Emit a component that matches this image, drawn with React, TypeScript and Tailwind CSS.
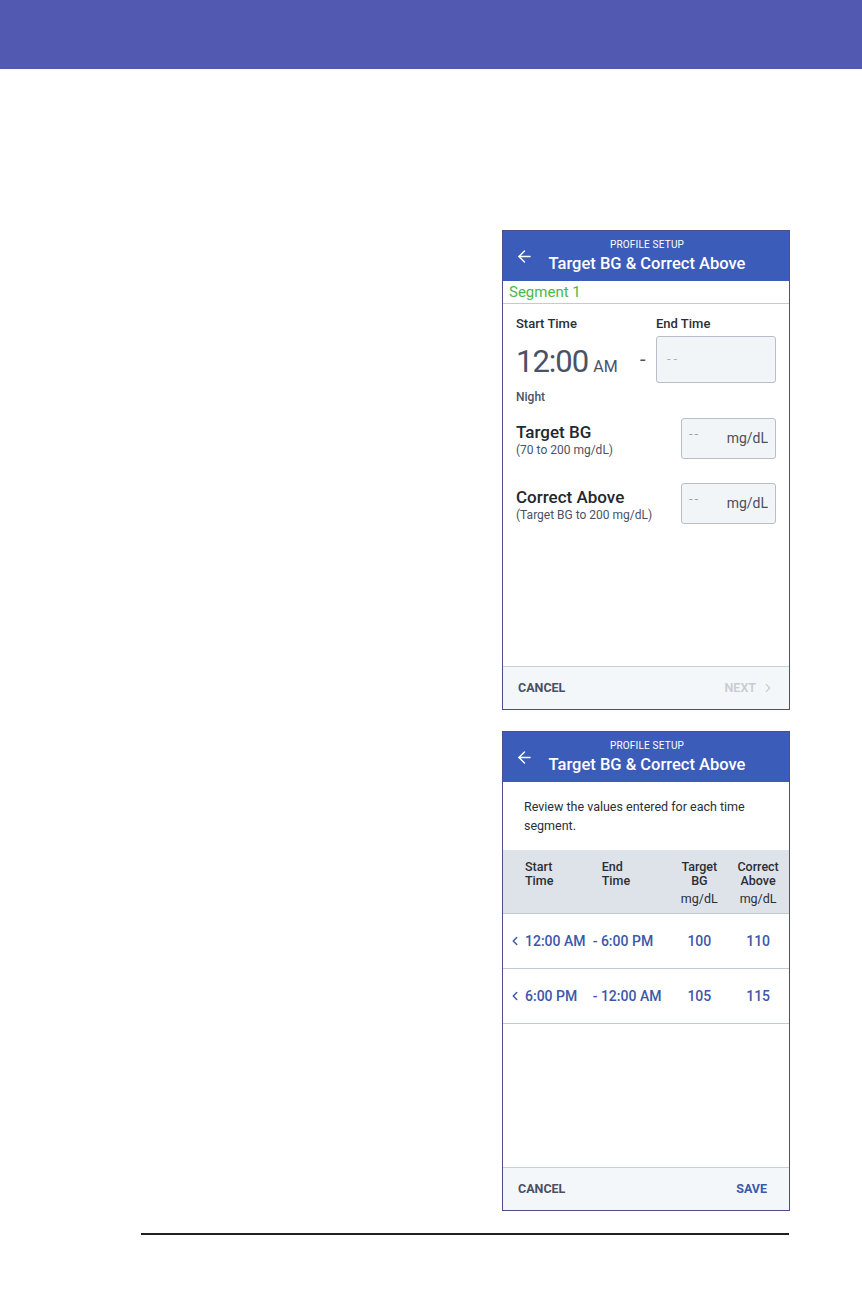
import { ArrowLeft, ChevronLeft, ChevronRight } from 'lucide-react';

function Header() {
  return (
    <div className="relative h-[50px] bg-[#3b5cb8] text-white shrink-0">
      <ArrowLeft className="absolute left-[12px] top-[16px] w-[19px] h-[19px]" strokeWidth={1.75} />
      <div className="flex flex-col items-center pl-[2px]">
        <div className="text-[10px] leading-[12px] mt-[8px] tracking-[0.2px]">PROFILE SETUP</div>
        <div className="text-[16.5px] leading-[20px] mt-[3px] font-medium">Target BG &amp; Correct Above</div>
      </div>
    </div>
  );
}

function Footer({ right }: { right: React.ReactNode }) {
  return (
    <div className="mt-auto h-[43px] border-t border-[#c9d0d8] bg-[#f3f7fa] flex items-center justify-between pl-[15px] text-[12.5px] font-bold">
      <span className="text-[#4a5060]">CANCEL</span>
      {right}
    </div>
  );
}

function ValueBox() {
  return (
    <div className="w-[95px] h-[41px] border border-[#b9bec6] rounded-[3px] bg-[#f2f5f8] flex items-center justify-between pl-[7px] pr-[7px]">
      <span className="text-[#9aa0aa] text-[13px] -mt-[8px] tracking-[2px]">--</span>
      <span className="text-[#4a5060] text-[14px]">mg/dL</span>
    </div>
  );
}

function SegmentScreen() {
  return (
    <div className="w-[288px] h-[480px] border border-[#4e4b8e] flex flex-col bg-white">
      <Header />
      <div className="h-[23px] border-b border-[#c7cbd1] pl-[6px] text-[15px] leading-[22px] text-[#4cb748]">Segment 1</div>
      <div className="pl-[13px] pr-[13px] text-[#3c4250]">
        <div className="flex mt-[10px] text-[13px] font-medium text-[#2a2e38]">
          <span className="w-[140px]">Start Time</span>
          <span>End Time</span>
        </div>
        <div className="flex items-start mt-[2px]">
          <div className="w-[124px] flex items-baseline mt-[7px]">
            <span className="text-[31px] leading-[38px] text-[#4a5264] tracking-[-1px]">12:00</span>
            <span className="text-[16px] ml-[5px] text-[#4a5264]">AM</span>
          </div>
          <span className="w-[16px] text-[20px] leading-[20px] mt-[13px] text-[#4a5264]">-</span>
          <div className="w-[120px] h-[47px] border border-[#b9bec6] rounded-[3px] bg-[#f2f5f8] flex items-center pl-[10px]">
            <span className="text-[#a8aeb8] text-[13px] tracking-[3px]">--</span>
          </div>
        </div>
        <div className="text-[12px] mt-[5px] font-medium text-[#4a5264]">Night</div>
        <div className="flex items-start justify-between mt-[12px]">
          <div className="mt-[4px]">
            <div className="text-[17px] leading-[20px] font-medium text-[#23272f]">Target BG</div>
            <div className="text-[12px] leading-[15px] mt-[1px] text-[#4a5264]">(70 to 200 mg/dL)</div>
          </div>
          <ValueBox />
        </div>
        <div className="flex items-start justify-between mt-[24px]">
          <div className="mt-[4px]">
            <div className="text-[17px] leading-[20px] font-medium text-[#23272f]">Correct Above</div>
            <div className="text-[12px] leading-[15px] mt-[1px] text-[#4a5264]">(Target BG to 200 mg/dL)</div>
          </div>
          <ValueBox />
        </div>
      </div>
      <Footer
        right={
          <span className="flex items-center text-[#c8ccd2] pr-[14px] font-semibold">
            NEXT
            <ChevronRight className="w-[14px] h-[14px] ml-[5px]" strokeWidth={2} />
          </span>
        }
      />
    </div>
  );
}

const rows = [
  { start: '12:00 AM', end: '- 6:00 PM', bg: '100', above: '110' },
  { start: '6:00 PM', end: '- 12:00 AM', bg: '105', above: '115' },
];

function ReviewScreen() {
  return (
    <div className="w-[288px] h-[480px] border border-[#4e4b8e] flex flex-col bg-white">
      <Header />
      <div className="h-[68px] pl-[21px] pr-[14px] pt-[15px] text-[12.5px] leading-[19px] text-[#2a2e38]">
        Review the values entered for each time segment.
      </div>
      <div className="h-[64px] bg-[#dee3ea] border-b border-[#c4c9d0] flex text-[12.5px] leading-[14px] text-[#2a2e38] pt-[10px]">
        <div className="w-[99px] pl-[22px] font-medium">Start<br />Time</div>
        <div className="w-[70px] font-medium">End<br />Time</div>
        <div className="w-[56px] flex flex-col items-center">
          <span className="font-medium">Target</span>
          <span className="font-medium">BG</span>
          <span className="mt-[4px]">mg/dL</span>
        </div>
        <div className="w-[62px] flex flex-col items-center">
          <span className="font-medium">Correct</span>
          <span className="font-medium">Above</span>
          <span className="mt-[4px]">mg/dL</span>
        </div>
      </div>
      {rows.map((r) => (
        <div key={r.start} className="h-[55px] border-b border-[#c4c9d0] flex items-center text-[14px] font-medium text-[#3b58aa]">
          <div className="w-[99px] pl-[5px] flex items-center">
            <ChevronLeft className="w-[14px] h-[14px] mr-[3px]" strokeWidth={2.5} />
            {r.start}
          </div>
          <div className="w-[70px] -ml-[9px] mr-[9px] whitespace-nowrap">{r.end}</div>
          <div className="w-[56px] text-center">{r.bg}</div>
          <div className="w-[62px] text-center">{r.above}</div>
        </div>
      ))}
      <Footer right={<span className="text-[#3b58aa] pr-[22px]">SAVE</span>} />
    </div>
  );
}

export default function App() {
  return (
    <div className="w-[862px] h-[1293px] bg-white" style={{ fontFamily: 'Roboto, "Noto Sans", sans-serif' }}>
      <div className="h-[69px] bg-[#5159b0]" />
      <div className="pl-[502px] pt-[161px] flex flex-col gap-[21px]">
        <SegmentScreen />
        <ReviewScreen />
      </div>
      <div className="ml-[141px] mt-[22px] w-[648px] h-[2px] bg-[#231f20]" />
    </div>
  );
}
